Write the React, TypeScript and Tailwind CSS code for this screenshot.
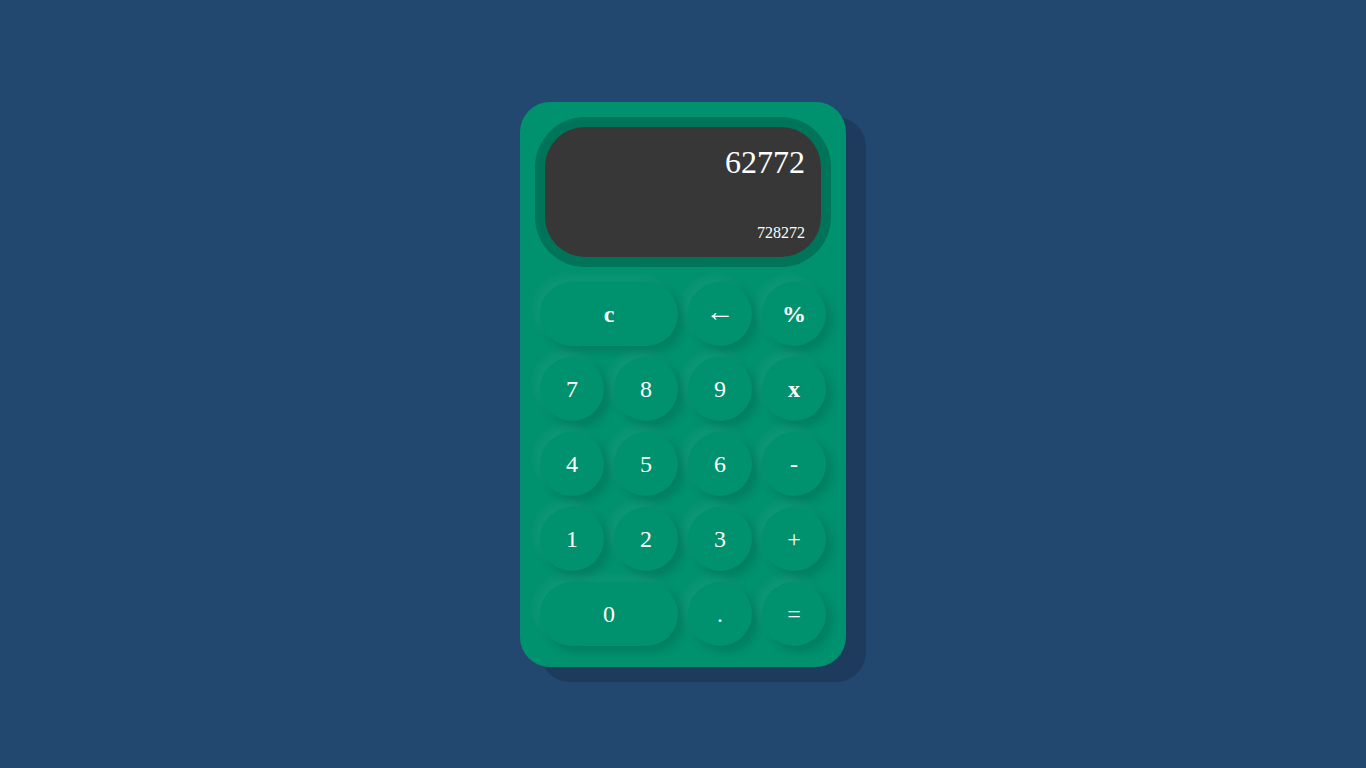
import React from "react";

const btn =
  "h-16 rounded-full bg-[#00916e] text-white text-[24px] flex items-center justify-center shadow-[6px_6px_10px_rgba(0,0,0,0.13),-6px_-6px_10px_rgba(255,255,255,0.05)]";

export default function App() {
  const keys: { label: string; wide?: boolean; bold?: boolean; arrow?: boolean }[] = [
    { label: "c", wide: true, bold: true },
    { label: "←", arrow: true },
    { label: "%", bold: true },
    { label: "7" },
    { label: "8" },
    { label: "9" },
    { label: "x", bold: true },
    { label: "4" },
    { label: "5" },
    { label: "6" },
    { label: "-" },
    { label: "1" },
    { label: "2" },
    { label: "3" },
    { label: "+" },
    { label: "0", wide: true },
    { label: "." },
    { label: "=" },
  ];
  return (
    <div
      className="w-full h-[768px] bg-[#234870] flex items-start justify-center pt-[102px]"
      style={{ fontFamily: '"Liberation Serif", "Times New Roman", serif' }}
    >
      <div className="w-[326px] h-[565px] rounded-[30px] bg-[#00916e] shadow-[20px_15px_0_#1e3a5c] p-[15px] flex flex-col">
        <div className="h-[150px] rounded-[50px] bg-[#007458] p-[10px]">
          <div className="h-full rounded-[40px] bg-[#373737] flex flex-col items-end justify-between pt-[17px] pb-[15px] px-4 text-white">
            <div className="text-[32px] leading-[37px]">62772</div>
            <div className="text-[16px] leading-[18px]">728272</div>
          </div>
        </div>
        <div className="mt-[15px] px-[5px] grid grid-cols-[64px_64px_64px_64px] gap-x-[10px] gap-y-[11px]">
          {keys.map((k, i) => (
            <div
              key={i}
              className={`${btn} ${k.wide ? "col-span-2" : ""} ${k.bold ? "font-bold" : ""}`}
            >
              {k.arrow ? (
                <span className="text-[29px] leading-none -mt-[6px]">←</span>
              ) : (
                k.label
              )}
            </div>
          ))}
        </div>
      </div>
    </div>
  );
}
